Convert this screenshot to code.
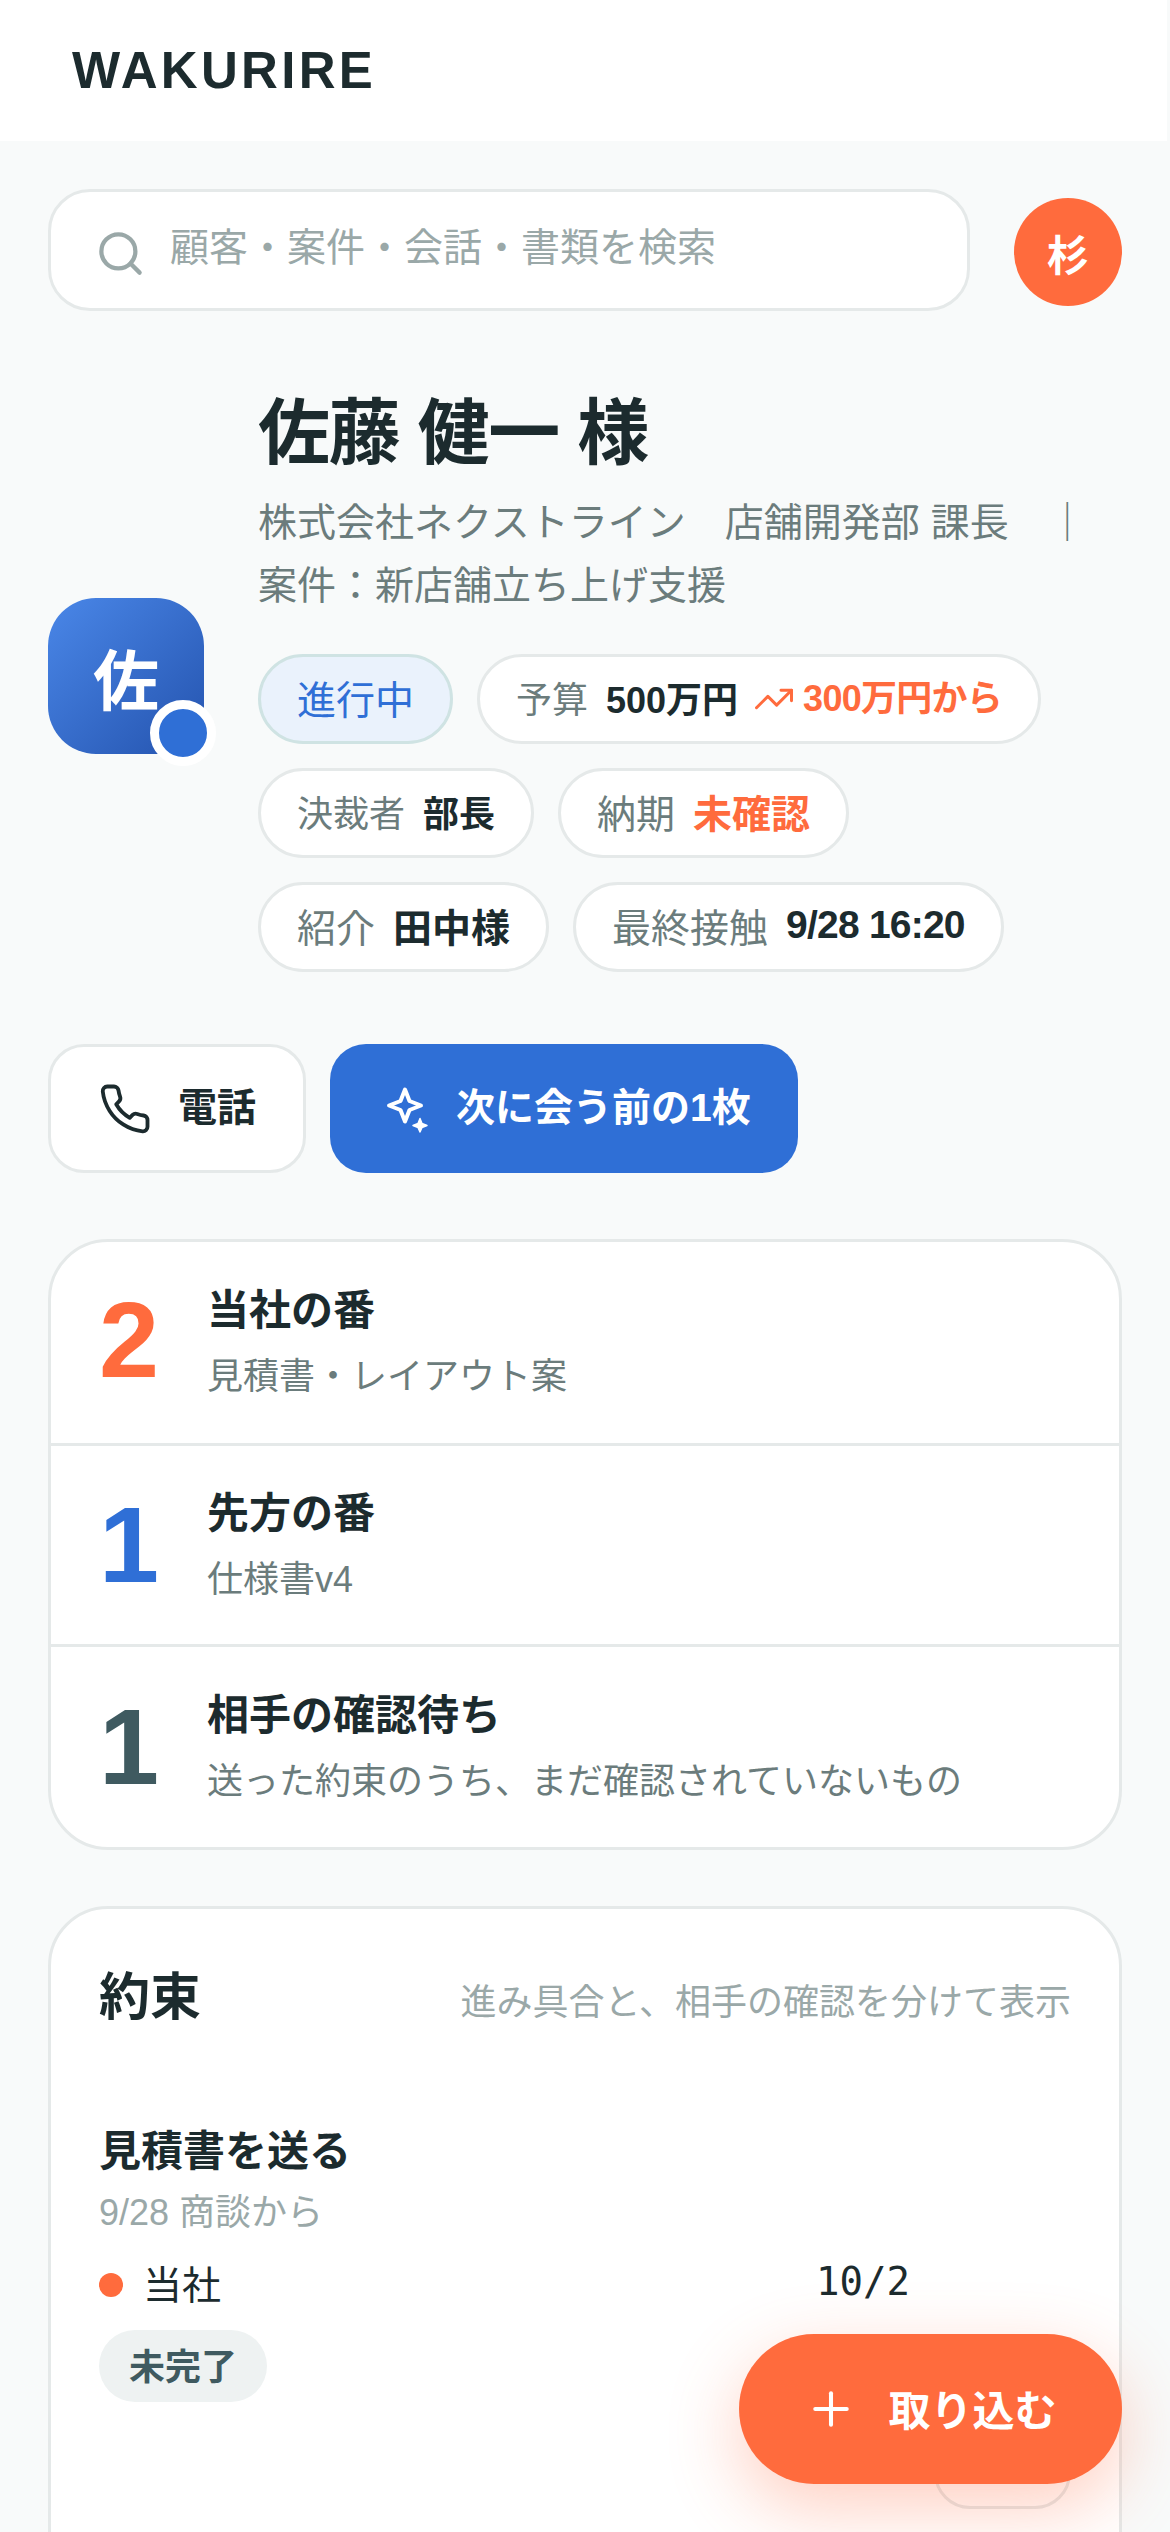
<div class="screen">
  <header class="top"><span class="brand">WAKURIRE</span></header>
  <main class="main">
    <div class="search-row">
      <div class="search">
        <svg class="ic-search" viewBox="0 0 24 24" fill="none" stroke="currentColor" stroke-width="2" stroke-linecap="round" stroke-linejoin="round"><circle cx="11" cy="11" r="8"/><path d="m21 21-4.3-4.3"/></svg>
        <span>顧客・案件・会話・書類を検索</span>
      </div>
      <div class="me">杉</div>
    </div>

    <section class="profile">
      <div class="avatar">佐<i class="status"></i></div>
      <div class="info">
        <h1>佐藤 健一 様</h1>
        <p class="sub">株式会社ネクストライン　店舗開発部 課長　｜案件：新店舗立ち上げ支援</p>
        <div class="chips">
          <span class="chip state">進行中</span>
          <span class="chip"><span class="lb s">予算</span><b class="small">500万円</b>
            <span class="up"><svg viewBox="0 0 24 24" fill="none" stroke="currentColor" stroke-width="1.7" stroke-linecap="round" stroke-linejoin="round"><path d="m22 7-8.500 8.500-5-5L2 17"/><path d="M16 7h6v6"/></svg>300万円から</span></span>
          <span class="chip"><span class="lb s">決裁者</span><b class="small">部長</b></span>
          <span class="chip"><span class="lb">納期</span><b class="warn">未確認</b></span>
          <span class="chip"><span class="lb">紹介</span><b>田中様</b></span>
          <span class="chip"><span class="lb">最終接触</span><b class="tight">9/28 16:20</b></span>
        </div>
      </div>
    </section>

    <div class="actions">
      <button class="btn call">
        <svg viewBox="0 0 24 24" fill="none" stroke="currentColor" stroke-width="1.7" stroke-linecap="round" stroke-linejoin="round"><path d="M22 16.920v3a2 2 0 0 1-2.180 2 19.790 19.790 0 0 1-8.630-3.070 19.500 19.500 0 0 1-6-6 19.790 19.790 0 0 1-3.070-8.670A2 2 0 0 1 4.110 2h3a2 2 0 0 1 2 1.720 12.840 12.840 0 0 0 .7 2.810 2 2 0 0 1-.45 2.110L8.090 9.910a16 16 0 0 0 6 6l1.270-1.270a2 2 0 0 1 2.110-.45 12.840 12.840 0 0 0 2.810.7A2 2 0 0 1 22 16.920z"/></svg>
        <span>電話</span>
      </button>
      <button class="btn brief">
        <svg viewBox="0 0 48 48" fill="none" stroke="currentColor" stroke-width="4" stroke-linejoin="round"><path d="M21 4.500 25.500 16 37 20.500 25.500 25 21 36.500 16.500 25 5 20.500 16.500 16Z"/><path d="M36 33.500 38 38.500 43 40.500 38 42.500 36 47 34 42.500 29 40.500 34 38.500Z" fill="currentColor" stroke-width="1.500"/></svg>
        <span>次に会う前の1枚</span>
      </button>
    </div>

    <section class="card stats">
      <div class="stat"><span class="num orange">2</span><div class="txt"><strong>当社の番</strong><small>見積書・レイアウト案</small></div></div>
      <div class="stat"><span class="num blue">1</span><div class="txt"><strong>先方の番</strong><small>仕様書v4</small></div></div>
      <div class="stat"><span class="num slate">1</span><div class="txt"><strong>相手の確認待ち</strong><small>送った約束のうち、まだ確認されていないもの</small></div></div>
    </section>

    <section class="card promises">
      <div class="head"><h2>約束</h2><span>進み具合と、相手の確認を分けて表示</span></div>
      <article class="item">
        <h3>見積書を送る</h3>
        <p class="from">9/28 商談から</p>
        <div class="meta"><span class="owner"><i></i>当社</span><time>10/2</time></div>
        <span class="tag">未完了</span>
        <div class="ghost-wrap"><span class="ghost"></span></div>
      </article>
    </section>
  </main>
  <button class="fab">
    <svg viewBox="0 0 24 24" fill="none" stroke="currentColor" stroke-width="1.8" stroke-linecap="round"><path d="M5 12h14"/><path d="M12 5v14"/></svg>
    <span>取り込む</span>
  </button>
</div>

<style>
  :global(body) { margin: 0; background: #f8fafa; }
  .screen {
    position: relative; width: 1170px; height: 2532px; overflow: hidden;
    background: #f8fafa; color: #1c2b2e;
    font-family: "Liberation Sans", "Noto Sans CJK JP", sans-serif;
  }
  .top { height: 141px; background: #fff; display: flex; align-items: center; padding-left: 72px; margin-right: 3px; box-sizing: border-box; }
  .brand { font-size: 51px; font-weight: 700; letter-spacing: 0.065em; }
  .main { padding: 48px 48px 0; }

  .search-row { display: flex; align-items: center; gap: 44px; }
  .search {
    flex: 1; height: 122px; box-sizing: border-box; border: 3px solid #e5e9e9; border-radius: 42px; background: #fff;
    display: flex; align-items: center; gap: 24px; padding: 0 44px; font-size: 39px; color: #9aa8a8;
  }
  .search span { position: relative; top: -6px; }
  .ic-search { width: 51px; height: 51px; flex: none; position: relative; top: 3px; }
  .me { width: 108px; height: 108px; margin-top: 4px; border-radius: 50%; background: #ff6b3d; color: #fff; font-size: 42px; font-weight: 700; display: flex; align-items: center; justify-content: center; }

  .profile { display: flex; align-items: center; gap: 54px; margin-top: 68px; }
  .avatar {
    position: relative; flex: none; width: 156px; height: 156px; border-radius: 48px;
    background: linear-gradient(135deg, #4a87e8, #2453ae); color: #fff; font-size: 66px; font-weight: 700;
    display: flex; align-items: center; justify-content: center;
  }
  .status { position: absolute; right: -12px; bottom: -12px; width: 48px; height: 48px; border-radius: 50%; background: #2f6fd6; border: 9px solid #fff; }
  .info { flex: 1; min-width: 0; }
  h1 { margin: 0; font-size: 72px; line-height: 108px; font-weight: 700; letter-spacing: -0.02em; }
  .sub { margin: 4px 0 0; font-size: 39px; line-height: 63px; color: #6b7c7c; }
  .chips { display: flex; flex-wrap: wrap; gap: 24px; margin-top: 37px; }
  .chip {
    height: 90px; box-sizing: border-box; padding: 0 36px 5px; border: 3px solid #e5e9e9; border-radius: 45px; background: #fff;
    display: inline-flex; align-items: center; gap: 18px; font-size: 39px;
  }
  .chip .lb { color: #6b7c7c; }
  .chip .lb.s { font-size: 36px; }
  .chip b { font-weight: 700; color: #1c2b2e; }
  .chip b.small { font-size: 36px; }
  .chip b.tight { letter-spacing: -0.02em; }
  .chip b.warn { color: #ff6b3d; }
  .chip.state { background: #eaf2fc; border-color: #cfe3e3; color: #2f6fd6; }
  .up { display: inline-flex; align-items: center; gap: 8px; margin-left: -3px; color: #ff6b3d; font-size: 36px; font-weight: 700; letter-spacing: -0.02em; position: relative; top: -2px; }
  .up svg { width: 42px; height: 42px; position: relative; top: 4px; }

  .actions { display: flex; gap: 24px; margin-top: 72px; }
  .btn {
    height: 129px; box-sizing: border-box; border-radius: 36px; font: inherit; font-size: 39px; font-weight: 700;
    display: inline-flex; align-items: center;
  }
  .btn span { margin-bottom: 10px; }
  .btn svg { flex: none; }
  .call { width: 258px; padding: 0 0 0 47px; gap: 26px; background: #fff; border: 3px solid #e5e9e9; color: #1c2b2e; }
  .call svg { width: 54px; height: 54px; }
  .brief { width: 468px; padding: 0 0 0 54px; gap: 24px; background: #2f6fd6; border: 0; color: #fff; }
  .brief svg { width: 48px; height: 48px; }

  .card { background: #fff; border: 3px solid #e5e9e9; border-radius: 60px; }
  .stats { margin-top: 66px; overflow: hidden; }
  .stat { display: flex; align-items: center; gap: 48px; padding: 36px 48px; height: 201px; box-sizing: border-box; }
  .stat + .stat { border-top: 3px solid #e5e9e9; }
  .stat:last-child { height: 203px; }
  .stat:first-child .num { margin-bottom: 6px; }
  .num { width: 60px; font-size: 108px; line-height: 1; font-weight: 700; }
  .orange { color: #ff6b3d; }
  .blue { color: #2f6fd6; }
  .slate { color: #3f5a60; }
  .txt { padding-top: 3px; }
  .stat strong { display: block; font-size: 42px; line-height: 60px; font-weight: 700; }
  .stat small { display: block; font-size: 36px; line-height: 60px; margin-top: 6px; color: #6b7c7c; }

  .promises { margin-top: 56px; padding: 48px; height: 900px; box-sizing: border-box; }
  .head { display: flex; align-items: center; justify-content: space-between; height: 78px; margin-top: 3px; }
  h2 { margin: 0 0 12px; font-size: 51px; font-weight: 700; }
  .head span { font-size: 36px; color: #9aa8a8; position: relative; top: 0; }
  .item { margin-top: 84px; }
  h3 { margin: 0; font-size: 42px; line-height: 60px; font-weight: 700; }
  .from { margin: 4px 0 0; font-size: 36px; line-height: 54px; color: #9aa8a8; }
  .meta { display: flex; position: relative; margin-top: 12px; height: 60px; align-items: center; }
  .owner { display: flex; align-items: center; gap: 20px; font-size: 39px; }
  .owner i { width: 24px; height: 24px; border-radius: 50%; background: #ff6b3d; position: relative; top: 3px; }
  time { position: absolute; left: 717px; top: 3px; font-family: "DejaVu Sans Mono", monospace; font-size: 39px; line-height: 54px; }
  .tag { display: inline-flex; align-items: center; height: 72px; box-sizing: border-box; padding: 0 30px 5px; margin-top: 18px; border-radius: 36px; background: #eef2f2; color: #3f5a60; font-size: 36px; font-weight: 700; }
  .ghost-wrap { display: flex; justify-content: flex-end; margin-top: 11px; }
  .ghost { width: 137px; height: 96px; box-sizing: border-box; border: 3px solid #e5e9e9; border-radius: 36px; }

  .fab {
    position: absolute; left: 739px; top: 2334px; width: 383px; height: 150px; border: 0; border-radius: 75px;
    background: #ff6b3d; color: #fff; font: inherit; font-size: 42px; font-weight: 700;
    display: flex; align-items: center; justify-content: center; gap: 30px;
    box-shadow: 0 24px 72px rgba(255, 107, 61, 0.32);
  }
  .fab span { margin-bottom: 3px; }
  .fab svg { width: 54px; height: 54px; }
</style>
